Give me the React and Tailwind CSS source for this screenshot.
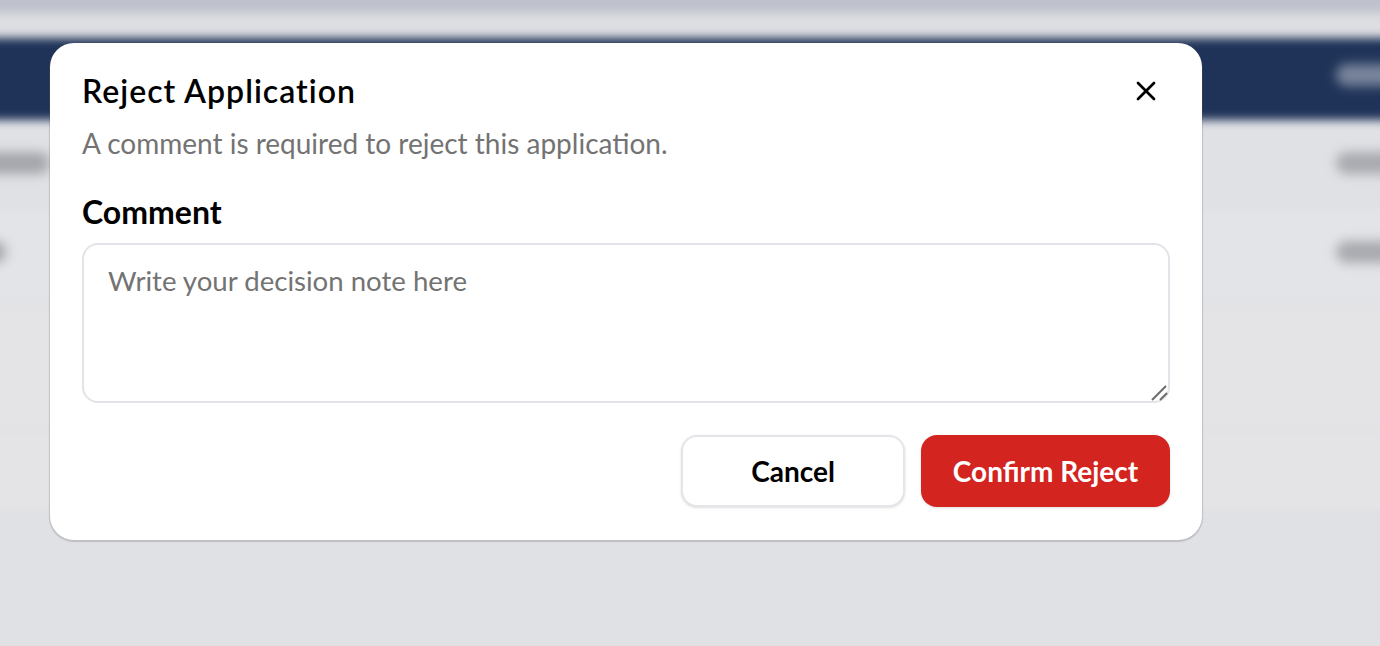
import React from "react";
import { X } from "lucide-react";

function Row({ height, bg, blobLeft, blobRight, top }) {
  return (
    <div className={`flex items-start justify-between border-b-2 border-[#dcdde0] ${bg}`} style={{ height }}>
      {blobLeft ? <div className="h-[22px] rounded-full bg-[#a5a6ab] blur-[3px]" style={{ marginTop: top, width: blobLeft }} /> : <div />}
      {blobRight ? <div className="h-[22px] w-[84px] rounded-full bg-[#a9aaaf] blur-[3px]" style={{ marginTop: top }} /> : <div />}
    </div>
  );
}

export default function App() {
  return (
    <div className="relative h-[646px] w-[1380px] overflow-hidden bg-[#e0e1e5] font-['Lato',sans-serif]">
      <div className="absolute -inset-x-10 top-[-20px] flex flex-col blur-[5px]">
        <div className="h-[33px] bg-[#bfc2cc]" />
        <div className="h-[25px] bg-[#dddee2]" />
        <div className="flex h-[82px] items-start justify-end bg-[#1f3358] pt-[26px]">
          <div className="h-[22px] w-[84px] rounded-full bg-[#7a869d] blur-[3px]" />
        </div>
        <Row height={88} bg="bg-[#e0e1e5]" blobLeft={90} blobRight top={32} />
        <Row height={97} bg="bg-[#e3e4e7]" blobLeft={46} blobRight top={33} />
        <Row height={125} bg="bg-[#e4e4e7]" top={0} />
        <Row height={83} bg="bg-[#e4e4e7]" top={0} />
      </div>

      <div className="absolute left-[50px] top-[43px] flex h-[497px] w-[1152px] flex-col rounded-3xl bg-white px-8 pb-[33px] pt-[28px] shadow-[0_1px_1px_1px_rgba(90,90,100,0.25)]">
        <div className="flex h-[40px] items-center justify-between">
          <h2 className="text-[32px] font-semibold tracking-[1px] text-black">Reject Application</h2>
          <button className="mr-2 text-black">
            <X size={32} strokeWidth={2} />
          </button>
        </div>
        <p className="mt-[12px] h-[40px] text-[28px] leading-[40px] text-[#737373]">A comment is required to reject this application.</p>
        <label className="mt-[29px] h-[40px] text-[32px] font-bold leading-[40px] text-black">Comment</label>
        <div className="relative mt-[11px] h-[160px]">
          <textarea
            readOnly
            placeholder="Write your decision note here"
            className="block h-[160px] w-full resize-none rounded-2xl border-2 border-[#e3e4ea] px-6 py-[16px] text-[27.6px] leading-[40px] outline-none placeholder:text-[#737373]"
          />
          <svg className="absolute bottom-0 right-0 h-[24px] w-[24px]" viewBox="0 0 24 24" fill="none" stroke="#6b6b6b" strokeWidth="2">
            <path d="M6 21 L20 7" />
            <path d="M14 21 L21 14" />
          </svg>
        </div>
        <div className="mt-[32px] flex justify-end gap-4">
          <button className="h-[72px] w-[224px] rounded-2xl border-2 border-[#e4e5e9] bg-white text-[28px] font-bold text-black shadow-sm">Cancel</button>
          <button className="h-[72px] w-[249px] rounded-2xl bg-[#d32420] text-[28px] font-bold text-white shadow-sm">Confirm Reject</button>
        </div>
      </div>
    </div>
  );
}
